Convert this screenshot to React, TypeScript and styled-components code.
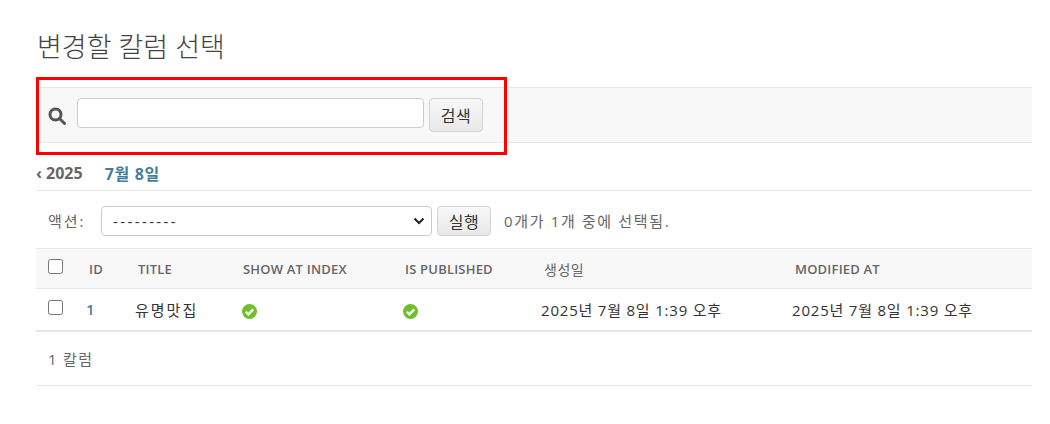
import styled, { createGlobalStyle } from 'styled-components'

const FONT = `"Open Sans", "Noto Sans CJK KR", "Noto Sans", sans-serif`

const GlobalStyle = createGlobalStyle`
  html, body {
    margin: 0;
    padding: 0;
    background: #fff;
  }

  body {
    font-family: ${FONT};
    font-size: 15px;
    color: #333;
  }
`

const Page = styled.div`
  position: relative;
  box-sizing: border-box;
  width: 1050px;
  height: 424px;
  padding: 31px 18px 0 36px;
  overflow: hidden;
`

const Title = styled.h1`
  margin: 0;
  height: 56px;
  padding-left: 1px;
  font-size: 27px;
  line-height: 32px;
  font-weight: 300;
  color: #444;
`

const Toolbar = styled.form`
  box-sizing: border-box;
  display: flex;
  align-items: flex-start;
  height: 56px;
  padding: 10px 0 0 12px;
  background: #f8f8f8;
  border-top: 1px solid #e6e6e6;
  border-bottom: 1px solid #e6e6e6;
`

const SearchIcon = styled.svg`
  width: 18px;
  height: 18px;
  margin: 9px 11px 0 0;
  fill: none;
  stroke: #555;
  stroke-width: 3;
`

const SearchInput = styled.input`
  box-sizing: border-box;
  width: 347px;
  height: 30px;
  padding: 0 8px;
  background: #fff;
  border: 1px solid #ccc;
  border-radius: 4px;
`

const Button = styled.button<{ $h: number }>`
  box-sizing: border-box;
  height: ${(p) => p.$h}px;
  width: 54px;
  margin-left: 5px;
  padding: 0;
  font-family: ${FONT};
  font-size: 16px;
  letter-spacing: 0.5px;
  color: #333;
  background: linear-gradient(#f8f8f8, #e8e8e8);
  border: 1px solid #d4d4d4;
  border-radius: 4px;
`

const DateNav = styled.nav`
  box-sizing: border-box;
  display: flex;
  align-items: center;
  height: 48px;
  padding-top: 12px;
  font-size: 16px;
  font-weight: 700;
  border-bottom: 1px solid #e6e6e6;
`

const BackLink = styled.span`
  color: #666;
  margin-right: 22px;
`

const DateLink = styled.span`
  color: #447e9b;
  letter-spacing: 0.7px;
`

const Actions = styled.div`
  display: flex;
  align-items: center;
  height: 57px;
  padding: 2px 0 0 12px;
  box-sizing: border-box;
  font-size: 15px;
  color: #666;
`

const ActionLabel = styled.label`
  width: 53px;
  letter-spacing: 2px;
`

const ActionSelect = styled.div`
  box-sizing: border-box;
  display: flex;
  align-items: center;
  justify-content: space-between;
  width: 331px;
  height: 30px;
  padding: 0 6px 0 11px;
  color: #333;
  background: #fff;
  border: 1px solid #ccc;
  border-radius: 4px;
`

const Dashes = styled.span`
  letter-spacing: 2.4px;
`

const Chevron = styled.svg`
  width: 12px;
  height: 8px;
  fill: none;
  stroke: #222;
  stroke-width: 2;
`

const Counter = styled.span`
  margin-left: 13px;
  letter-spacing: 1.65px;
`

const Table = styled.table`
  width: 996px;
  border-collapse: collapse;
  table-layout: fixed;
  border-top: 1px solid #e6e6e6;
  border-bottom: 2px solid #e6e6e6;
`

const HeadRow = styled.tr`
  height: 40px;
  background: #f8f8f8;
  border-bottom: 1px solid #e6e6e6;
`

const HeadCell = styled.th<{ $pad?: number }>`
  padding: 0 0 0 ${(p) => p.$pad ?? 15}px;
  font-size: 13px;
  font-weight: 600;
  letter-spacing: 0.2px;
  text-align: left;
  color: #666;
`

const KoreanHeadCell = styled(HeadCell)`
  font-size: 14px;
  font-weight: 400;
  letter-spacing: 0.5px;
`

const BodyRow = styled.tr`
  height: 42px;
`

const Cell = styled.td<{ $spacing?: number }>`
  padding: 0 0 0 12px;
  font-size: 15px;
  letter-spacing: ${(p) => p.$spacing ?? 0}px;
  color: #333;
`

const CheckCell = styled.td`
  padding: 0 0 0 12px;
`

const CheckHead = styled.th`
  padding: 0 0 0 12px;
  text-align: left;
`

const Box = styled.span`
  display: block;
  box-sizing: border-box;
  width: 15px;
  height: 15px;
  margin-top: -4px;
  background: #fff;
  border: 1px solid #767676;
  border-radius: 2.5px;
`

const IdCell = styled(Cell)`
  font-weight: 600;
  color: #447e9b;
`

const BoolIcon = styled.svg`
  display: block;
  width: 15px;
  height: 15px;
  margin-top: 5px;
`

const Paginator = styled.p`
  box-sizing: border-box;
  display: flex;
  align-items: center;
  margin: 0;
  height: 54px;
  padding-left: 12px;
  font-size: 15px;
  letter-spacing: 1.3px;
  color: #666;
  border-bottom: 1px solid #e6e6e6;
`

const Highlight = styled.div`
  position: absolute;
  left: 36px;
  top: 77px;
  box-sizing: border-box;
  width: 471px;
  height: 78px;
  border: 3px solid #f00;
`

const Yes = () => (
  <BoolIcon viewBox="0 0 14 14">
    <circle cx="7" cy="7" r="7" fill="#70bf2b" />
    <path d="M3.6 7.2 6 9.6 10.5 5" fill="none" stroke="#fff" strokeWidth="2.2" />
  </BoolIcon>
)

const widths = [38, 49, 107, 161, 138, 251, 252]

export default function App() {
  return (
    <Page>
      <GlobalStyle />
      <Title>변경할 칼럼 선택</Title>
      <Toolbar>
        <SearchIcon viewBox="0 0 18 18">
          <circle cx="7.5" cy="7.5" r="5.5" />
          <path d="M11.5 11.5 16.5 16.5" strokeLinecap="round" />
        </SearchIcon>
        <SearchInput />
        <Button type="button" $h={34}>검색</Button>
      </Toolbar>
      <DateNav>
        <BackLink>‹ 2025</BackLink>
        <DateLink>7월 8일</DateLink>
      </DateNav>
      <Actions>
        <ActionLabel>액션:</ActionLabel>
        <ActionSelect>
          <Dashes>---------</Dashes>
          <Chevron viewBox="0 0 12 8">
            <path d="M1.5 1.5 6 6 10.5 1.5" />
          </Chevron>
        </ActionSelect>
        <Button type="button" $h={30}>실행</Button>
        <Counter>0개가 1개 중에 선택됨.</Counter>
      </Actions>
      <Table>
        <colgroup>
          {widths.map((w, i) => (
            <col key={i} style={{ width: w }} />
          ))}
        </colgroup>
        <thead>
          <HeadRow>
            <CheckHead><Box /></CheckHead>
            <HeadCell>ID</HeadCell>
            <HeadCell>TITLE</HeadCell>
            <HeadCell $pad={13}>SHOW AT INDEX</HeadCell>
            <HeadCell $pad={14}>IS PUBLISHED</HeadCell>
            <KoreanHeadCell>생성일</KoreanHeadCell>
            <HeadCell>MODIFIED AT</HeadCell>
          </HeadRow>
        </thead>
        <tbody>
          <BodyRow>
            <CheckCell><Box /></CheckCell>
            <IdCell>1</IdCell>
            <Cell $spacing={2}>유명맛집</Cell>
            <Cell><Yes /></Cell>
            <Cell><Yes /></Cell>
            <Cell $spacing={0.8}>2025년 7월 8일 1:39 오후</Cell>
            <Cell $spacing={0.8}>2025년 7월 8일 1:39 오후</Cell>
          </BodyRow>
        </tbody>
      </Table>
      <Paginator>1 칼럼</Paginator>
      <Highlight />
    </Page>
  )
}
